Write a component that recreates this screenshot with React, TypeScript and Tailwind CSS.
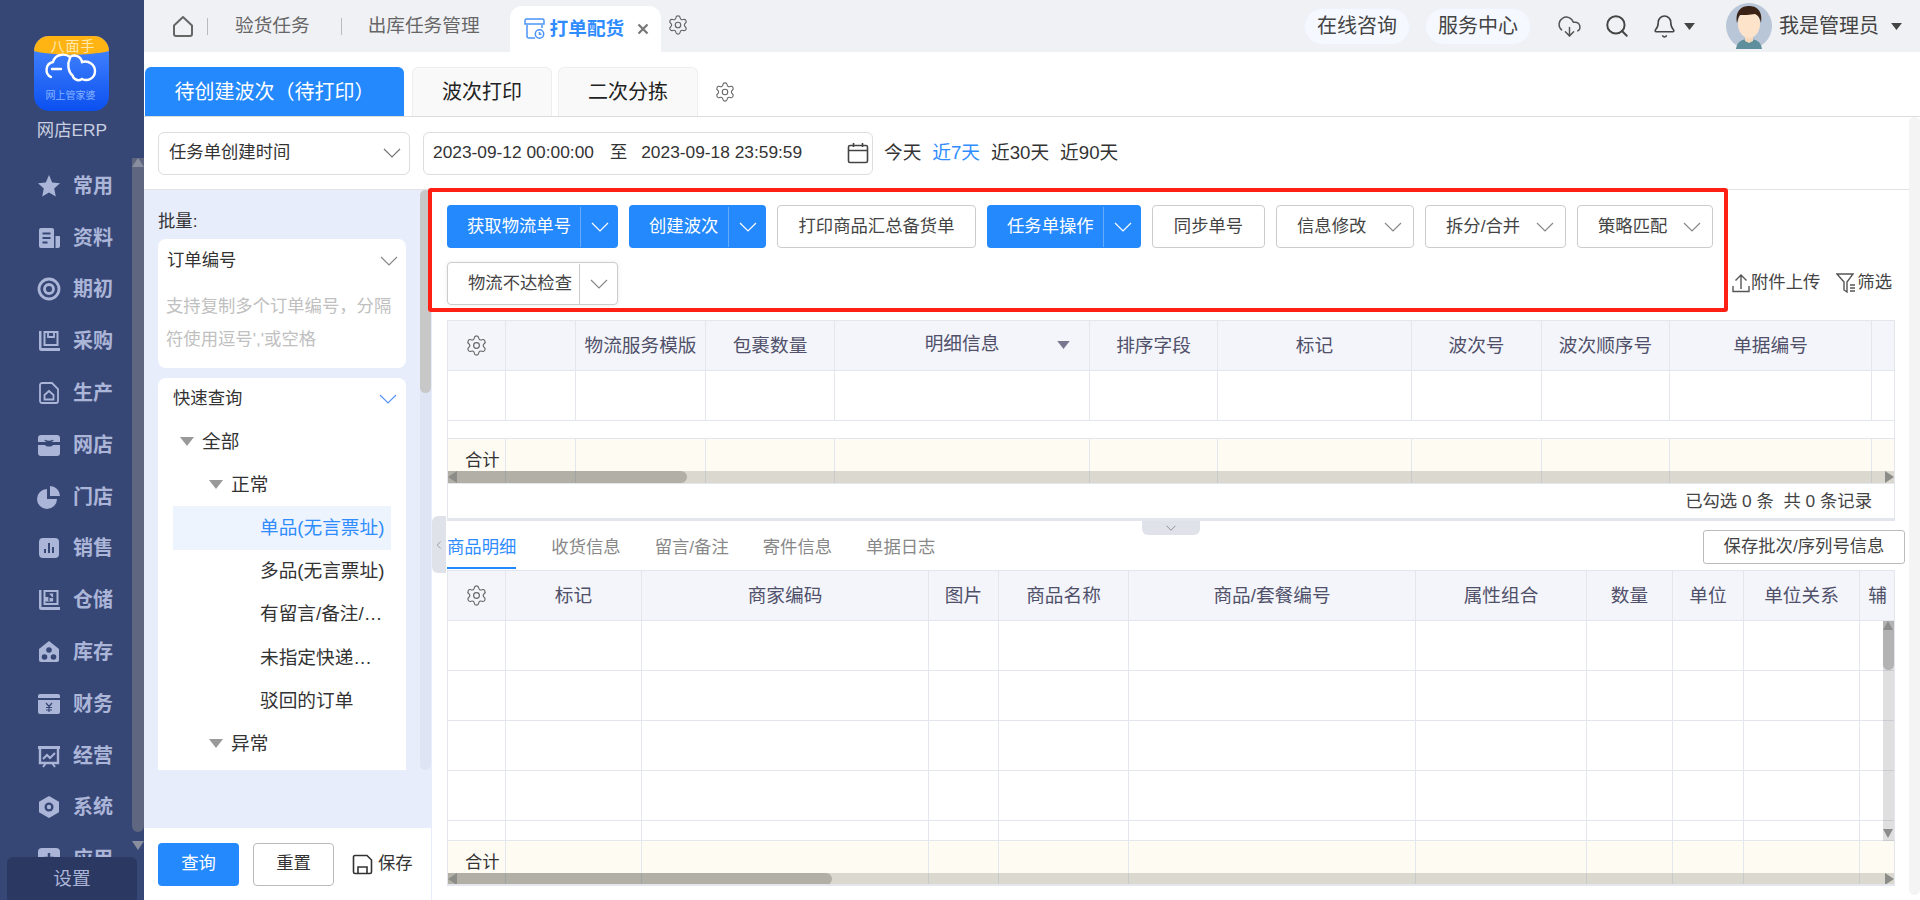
import { CloudDownload, Search, Bell, Settings } from 'lucide-react'
import type { ReactNode } from 'react'

const GRID_TOP = 'grid grid-cols-[58px_70px_130px_129px_255px_128px_194px_130px_128px_202px_24px]'
const GRID_BOTTOM = 'grid grid-cols-[58px_136px_287px_70px_130px_287px_171px_86px_71px_116px_36px]'

const TOP_HEADERS = ['', '', '物流服务模版', '包裹数量', '明细信息', '排序字段', '标记', '波次号', '波次顺序号', '单据编号', '']
const BOTTOM_HEADERS = ['', '标记', '商家编码', '图片', '商品名称', '商品/套餐编号', '属性组合', '数量', '单位', '单位关系', '辅']

function Chevron({ className }: { className?: string }) {
  return (
    <svg width="18" height="10" viewBox="0 0 18 10" fill="none" stroke="currentColor" strokeWidth="1.2" className={className}>
      <polyline points="1,1 9,9 17,1" />
    </svg>
  )
}

function Caret({ className }: { className: string }) {
  return (
    <svg width="14" height="9" viewBox="0 0 14 9" className={className}>
      <polygon points="0,0 14,0 7,9" fill="currentColor" />
    </svg>
  )
}

const MENU: { label: string; icon: ReactNode }[] = [
  { label: '常用', icon: <polygon points="12,1 15.2,8.4 23,9.2 17.2,14.6 18.8,22.6 12,18.4 5.2,22.6 6.8,14.6 1,9.2 8.8,8.4" fill="currentColor" /> },
  {
    label: '资料',
    icon: (
      <>
        <path d="M2 4a2 2 0 0 1 2-2h11a2 2 0 0 1 2 2v18H4a2 2 0 0 1-2-2z" fill="currentColor" />
        <path d="M18.5 10H22a1 1 0 0 1 1 1v9a2 2 0 0 1-2 2h-2.500z" fill="currentColor" />
        <path d="M5.500 7.500h8M5.500 12h8M5.500 16.500h5" stroke="#374775" strokeWidth="2" />
      </>
    ),
  },
  {
    label: '期初',
    icon: (
      <>
        <circle cx="12" cy="12" r="10" fill="none" stroke="currentColor" strokeWidth="2.800" />
        <circle cx="12" cy="12" r="4.500" fill="none" stroke="currentColor" strokeWidth="2.800" />
      </>
    ),
  },
  {
    label: '采购',
    icon: (
      <>
        <path d="M2 2h2.500v17H23v3H4.500A2.500 2.500 0 0 1 2 19.500z" fill="currentColor" />
        <path d="M7.500 3h13v13h-13z" fill="none" stroke="currentColor" strokeWidth="2" />
        <path d="M11 3v5h6V3" fill="none" stroke="currentColor" strokeWidth="1.800" />
      </>
    ),
  },
  {
    label: '生产',
    icon: (
      <>
        <path d="M5 2h10l6 6v12a2 2 0 0 1-2 2H5a2 2 0 0 1-2-2V4a2 2 0 0 1 2-2z" fill="none" stroke="currentColor" strokeWidth="1.800" />
        <path d="M7.500 14l4.500-4 4.500 4v4.500h-9z" fill="none" stroke="currentColor" strokeWidth="1.800" />
      </>
    ),
  },
  {
    label: '网店',
    icon: (
      <>
        <path d="M4 2h16a3 3 0 0 1 3 3v4H1V5a3 3 0 0 1 3-3z" fill="currentColor" />
        <path d="M1 12h7c1 2 7 2 8 0h7v8a3 3 0 0 1-3 3H4a3 3 0 0 1-3-3z" fill="currentColor" />
        <path d="M8 7c1 2 7 2 8 0" stroke="#374775" strokeWidth="1.600" fill="none" />
      </>
    ),
  },
  {
    label: '门店',
    icon: (
      <>
        <path d="M10 4a10 10 0 1 0 10 10H10z" fill="currentColor" />
        <path d="M13 1a10 10 0 0 1 10 10H13z" fill="currentColor" />
      </>
    ),
  },
  {
    label: '销售',
    icon: (
      <>
        <rect x="2" y="2" width="20" height="20" rx="4" fill="currentColor" />
        <path d="M8 17v-4M12 17V7M16 17v-6" stroke="#374775" strokeWidth="2" />
      </>
    ),
  },
  {
    label: '仓储',
    icon: (
      <>
        <path d="M2 2h2.500v17H23v3H4.500A2.500 2.500 0 0 1 2 19.500z" fill="currentColor" />
        <path d="M7.500 3h13v13h-13z" fill="none" stroke="currentColor" strokeWidth="2" />
        <path d="M12.500 6h3v7h-7v-3.500h7" fill="currentColor" stroke="currentColor" strokeWidth="1.200" />
        <path d="M12 9.500h4M12 6v7" stroke="#374775" strokeWidth="1.200" />
      </>
    ),
  },
  {
    label: '库存',
    icon: (
      <>
        <path d="M12 1l10 8v11a2 2 0 0 1-2 2H4a2 2 0 0 1-2-2V9z" fill="currentColor" />
        <circle cx="12" cy="10" r="2.800" fill="#374775" />
        <circle cx="7.500" cy="17" r="2.800" fill="#374775" />
        <circle cx="16.500" cy="17" r="2.800" fill="#374775" />
      </>
    ),
  },
  {
    label: '财务',
    icon: (
      <>
        <path d="M3 2h18a2 2 0 0 1 2 2v2H1V4a2 2 0 0 1 2-2z" fill="currentColor" />
        <path d="M1 8h22v12a2 2 0 0 1-2 2H3a2 2 0 0 1-2-2z" fill="currentColor" />
        <path d="M9 11l3 3.500 3-3.500M12 14.500V20M9 15.500h6M9 18h6" stroke="#374775" strokeWidth="1.200" fill="none" />
      </>
    ),
  },
  {
    label: '经营',
    icon: (
      <>
        <path d="M1 2h22v3H1z" fill="currentColor" />
        <path d="M3 5v14h18V5" fill="none" stroke="currentColor" strokeWidth="2.400" />
        <path d="M6 15l4-4 3 3 5-5" fill="none" stroke="currentColor" strokeWidth="2" />
        <path d="M6 23l3-4M18 23l-3-4" stroke="currentColor" strokeWidth="2" />
      </>
    ),
  },
  {
    label: '系统',
    icon: (
      <>
        <path d="M12 1l10 5.700v10.600L12 23 2 17.300V6.700z" fill="currentColor" />
        <circle cx="12" cy="12" r="4.500" fill="#374775" />
        <circle cx="12" cy="12" r="2.200" fill="currentColor" />
      </>
    ),
  },
  {
    label: '应用',
    icon: (
      <>
        <rect x="1" y="1" width="22" height="22" rx="4" fill="currentColor" />
        <path d="M12 6v10M7 11h10" stroke="#374775" strokeWidth="2.500" />
      </>
    ),
  },
]

const TREE = [
  { label: '全部', pad: 'pl-[7px]', arrow: true },
  { label: '正常', pad: 'pl-[36px]', arrow: true },
  { label: '单品(无言票址)', pad: 'pl-[87px]', active: true },
  { label: '多品(无言票址)', pad: 'pl-[87px]' },
  { label: '有留言/备注/…', pad: 'pl-[87px]' },
  { label: '未指定快递…', pad: 'pl-[87px]' },
  { label: '驳回的订单', pad: 'pl-[87px]' },
  { label: '异常', pad: 'pl-[36px]', arrow: true },
]

function Logo() {
  return (
    <svg width="75" height="75" viewBox="0 0 75 75" className="mx-[34px] block">
      <defs>
        <linearGradient id="logoBlue" x1="0" y1="0" x2="0" y2="1">
          <stop offset="0" stopColor="#4b8bff" />
          <stop offset="1" stopColor="#0b50f0" />
        </linearGradient>
        <clipPath id="logoClip">
          <rect width="75" height="75" rx="15" />
        </clipPath>
      </defs>
      <g clipPath="url(#logoClip)">
        <rect width="75" height="75" fill="url(#logoBlue)" />
        <path d="M0 0h75v15C55 20 20 20 0 15z" fill="#ffb414" />
        <text x="39" y="15" textAnchor="middle" fontSize="14" letterSpacing="1" fill="#ffe9b0">八面手</text>
        <path d="M17 41a8 8 0 0 1 2-15c2-8 12-9 17-5 4-3 11-1 12 5 7-2 13 3 13 9 0 7-7 11-13 8-3 2-6 2-9-2M18 33h9M36 22c-3 6-2 14 3 18" fill="none" stroke="#fff" strokeWidth="2.400" strokeLinecap="round" />
        <text x="36.500" y="63" textAnchor="middle" fontSize="10" fill="#86b2ff">网上管家婆</text>
      </g>
    </svg>
  )
}

function Sidebar() {
  return (
    <aside className="relative flex h-[900px] w-[144px] shrink-0 flex-col overflow-hidden bg-[#374775] pt-[36px]">
      <Logo />
      <div className="mt-[7px] h-[24px] text-center text-[17.33px] leading-[24px] text-[#c9cfe0]">网店ERP</div>
      <nav className="mt-[18px]">
        {MENU.map((item) => (
          <div key={item.label} className="flex h-[51.8px] items-center pl-[37px] text-[#abb5d8]">
            <svg width="24" height="24" viewBox="0 0 24 24" className="shrink-0">
              {item.icon}
            </svg>
            <span className="ml-[12px] text-[20px] font-bold">{item.label}</span>
          </div>
        ))}
      </nav>
      <div className="absolute right-0 top-[158px] h-[674px] w-[12px] rounded-b-md bg-[#5f667f]" />
      <div className="absolute right-0 top-[158px] h-0 w-0 border-x-[6px] border-b-[9px] border-x-transparent border-b-[#8a8f9f]" />
      <div className="absolute right-0 top-[841px] h-0 w-0 border-x-[6px] border-t-[9px] border-x-transparent border-t-[#8a8f9f]" />
      <div className="absolute bottom-0 left-[7px] flex h-[43px] w-[130px] items-center justify-center rounded-t-md bg-[#2b3862] text-[18.67px] text-[#abb5d8]">
        设置
      </div>
    </aside>
  )
}

function TopBar() {
  return (
    <header className="flex h-[52px] shrink-0 items-end bg-[#f0f1f5] text-[18.67px] text-[#666]">
      <div className="flex h-full items-center pl-[28px]">
        <svg width="22" height="22" viewBox="0 0 22 22" fill="none" stroke="#666" strokeWidth="2">
          <path d="M2 10.500L11 2l9 8.500V19a2 2 0 0 1-2 2H4a2 2 0 0 1-2-2z" strokeLinejoin="round" />
        </svg>
        <span className="ml-[13px] h-[17px] w-px bg-[#bbb]" />
        <span className="ml-[27px]">验货任务</span>
        <span className="ml-[31px] h-[17px] w-px bg-[#bbb]" />
        <span className="ml-[26px]">出库任务管理</span>
      </div>
      <div className="ml-[30px] flex h-[46px] w-[151px] items-center rounded-t-xl bg-white pl-[14px]">
        <svg width="21" height="22" viewBox="0 0 21 22" fill="none" stroke="#4a94f7" strokeWidth="1.500">
          <path d="M3 7v11a2 2 0 0 0 2 2h6M18 7v3M1 2.500A1.500 1.500 0 0 1 2.500 1h16A1.500 1.500 0 0 1 20 2.500V6H1z" />
          <circle cx="15.500" cy="16" r="4.200" />
          <path d="M15.500 14v2.200h2" />
        </svg>
        <span className="ml-[5px] font-bold text-[#2f8cff]">打单配货</span>
        <svg width="12" height="12" viewBox="0 0 12 12" stroke="#777" strokeWidth="2.200" className="ml-[13px]">
          <path d="M1.500 1.500l9 9M10.500 1.500l-9 9" />
        </svg>
      </div>
      <div className="flex h-full items-center">
        <Settings size={22} strokeWidth={1.3} className="ml-[6px] -mt-[3px] text-[#666]" />
      </div>
      <div className="ml-auto flex h-full items-center text-[20px] text-[#444]">
        <span className="flex h-[37px] w-[106px] items-center justify-center rounded-full border border-[#eef2fb] bg-[#f5f8ff]">在线咨询</span>
        <span className="ml-[15px] flex h-[37px] w-[106px] items-center justify-center rounded-full border border-[#eef2fb] bg-[#f5f8ff]">服务中心</span>
        <CloudDownload size={25} strokeWidth={1.4} className="ml-[26px] text-[#555]" />
        <Search size={26} strokeWidth={1.8} className="ml-[22px] text-[#444]" />
        <Bell size={25} strokeWidth={1.5} className="ml-[22px] text-[#444]" />
        <Caret className="ml-[7px] h-[7px] w-[11px] text-[#444]" />
        <svg width="46" height="46" viewBox="0 0 46 46" className="ml-[31px]">
          <circle cx="23" cy="23" r="23" fill="#b9c6d8" />
          <path d="M10 46c1-8 7-10 13-10s12 2 13 10z" fill="#5f8f9c" />
          <path d="M19 30h8v8l-4 2-4-2z" fill="#f6d9bd" />
          <ellipse cx="23" cy="21" rx="11" ry="14" fill="#fde3c9" />
          <path d="M11 20C9 7 16 3 23 3s14 4 12 17c-1-5-3-8-6-9-5 1-12 1-15 1-2 2-2 5-3 8z" fill="#3a2316" />
        </svg>
        <span className="ml-[7px]">我是管理员</span>
        <Caret className="ml-[12px] mr-[18px] h-[7px] w-[11px] text-[#444]" />
      </div>
    </header>
  )
}

function SubTabs() {
  return (
    <div className="flex h-[65px] shrink-0 items-end border-b border-[#ddd] pl-px text-[20px]">
      <div className="flex h-[49px] w-[259px] items-center justify-center rounded-t-md bg-[#2489fd] text-white">待创建波次（待打印）</div>
      <div className="ml-[8px] flex h-[49px] w-[140px] items-center justify-center rounded-t-md border border-b-0 border-[#eee] bg-[#f9f9f9] text-[#222]">波次打印</div>
      <div className="ml-[6px] flex h-[49px] w-[140px] items-center justify-center rounded-t-md border border-b-0 border-[#eee] bg-[#f9f9f9] text-[#222]">二次分拣</div>
      <div className="flex h-[49px] items-center">
        <Settings size={22} strokeWidth={1.2} className="ml-[16px] text-[#666]" />
      </div>
    </div>
  )
}

function FilterRow() {
  return (
    <div className="flex h-[73px] shrink-0 items-center border-b border-[#e2e2e2] pl-[14px] text-[#333]">
      <div className="flex h-[43px] w-[252px] items-center justify-between rounded-md border border-[#ddd] pl-[10px] pr-[8px] text-[17.33px]">
        任务单创建时间
        <Chevron className="text-[#777]" />
      </div>
      <div className="ml-[13px] flex h-[43px] w-[450px] items-center rounded-md border border-[#ddd] pl-[9px] text-[17.33px]">
        <span>2023-09-12 00:00:00</span>
        <span className="ml-[16px]">至</span>
        <span className="ml-[14px]">2023-09-18 23:59:59</span>
        <svg width="22" height="22" viewBox="0 0 22 22" fill="none" stroke="#444" strokeWidth="1.600" className="ml-[45px]">
          <rect x="1.500" y="3.500" width="19" height="17" rx="1.500" />
          <path d="M1.500 8.500h19M6.500 1v4M15.500 1v4" />
        </svg>
      </div>
      <div className="ml-[11px] flex gap-x-[11px] text-[18.67px]">
        <span>今天</span>
        <span className="text-[#2f8cff]">近7天</span>
        <span>近30天</span>
        <span>近90天</span>
      </div>
    </div>
  )
}

function SplitButton({ label, width, primary }: { label: string; width: string; primary?: boolean }) {
  return (
    <div
      className={`flex h-[43px] items-center rounded-[4px] pl-[20px] text-[17.33px] ${width} ${
        primary ? 'bg-[#2489fd] text-white' : 'border border-[#ccc] bg-white text-[#444] shadow-[0_0_4px_rgba(0,0,0,0.08)]'
      }`}
    >
      {label}
      <span className={`ml-auto flex h-[40px] w-[38px] items-center justify-center border-l ${primary ? 'border-white/30 text-white' : 'border-[#ccc] text-[#888]'}`}>
        <Chevron />
      </span>
    </div>
  )
}

function PlainButton({ label, width }: { label: string; width: string }) {
  return (
    <div className={`flex h-[43px] items-center justify-center rounded-[4px] border border-[#ccc] bg-white text-[17.33px] text-[#444] ${width}`}>
      {label}
    </div>
  )
}

function MenuButton({ label, width }: { label: string; width: string }) {
  return (
    <div className={`flex h-[43px] items-center rounded-[4px] border border-[#ccc] bg-white pl-[20px] pr-[11px] text-[17.33px] text-[#444] ${width}`}>
      {label}
      <Chevron className="ml-auto text-[#888]" />
    </div>
  )
}

function Toolbar() {
  return (
    <div className="flex h-[130px] shrink-0 pl-[15px] pt-[15px]">
      <div className="flex w-[1280px] flex-wrap content-start gap-x-[11px] gap-y-[14px]">
        <SplitButton label="获取物流单号" width="w-[171px]" primary />
        <SplitButton label="创建波次" width="w-[137px]" primary />
        <PlainButton label="打印商品汇总备货单" width="w-[199px]" />
        <SplitButton label="任务单操作" width="w-[154px]" primary />
        <PlainButton label="同步单号" width="w-[113px]" />
        <MenuButton label="信息修改" width="w-[138px]" />
        <MenuButton label="拆分/合并" width="w-[141px]" />
        <MenuButton label="策略匹配" width="w-[136px]" />
        <SplitButton label="物流不达检查" width="w-[171px]" />
      </div>
      <div className="ml-[5px] mt-[66px] flex h-[24px] items-center text-[17.33px] text-[#444]">
        <svg width="18" height="20" viewBox="0 0 18 20" fill="none" stroke="#555" strokeWidth="1.400">
          <path d="M9 16V2M3.500 7.500L9 2l5.500 5.500M1 13v5.500h16V13" />
        </svg>
        <span className="ml-[1px]">附件上传</span>
        <svg width="20" height="22" viewBox="0 0 20 22" fill="none" stroke="#555" strokeWidth="1.400" className="ml-[16px]">
          <path d="M1 2h16l-6 8v10l-3-2v-8zM14 13h5M14 16h5M14 19h5" />
        </svg>
        <span className="ml-[1px]">筛选</span>
      </div>
    </div>
  )
}

function HeaderCell({ label, index, sortable }: { label: string; index: number; sortable?: boolean }) {
  return (
    <div className="relative flex h-[50px] items-center justify-center border-r border-b border-[#e4e6ee] bg-[#f3f5fa] text-[18.67px] text-[#50506a]">
      {index === 0 && <Settings size={23} strokeWidth={1.2} className="text-[#666]" />}
      <span className={label === '明细信息' ? '-mt-[3px]' : ''}>{label}</span>
      {sortable && label === '明细信息' && <Caret className="absolute right-[19px] top-[20px] h-[8px] w-[13px] text-[#777790]" />}
    </div>
  )
}

function HorizontalScroll({ thumb }: { thumb: string }) {
  return (
    <div className="absolute inset-x-0 bottom-0 h-[12px] bg-[rgba(110,110,90,0.24)]">
      <div className={`h-full rounded-r-md bg-[rgba(70,70,60,0.28)] ${thumb}`} />
      <div className="absolute left-0 top-0 h-0 w-0 border-y-[6px] border-r-[9px] border-y-transparent border-r-[#8c8c88]" />
      <div className="absolute right-0 top-0 h-0 w-0 border-y-[6px] border-l-[9px] border-y-transparent border-l-[#8c8c88]" />
    </div>
  )
}

function EmptyRow({ grid, height }: { grid: string; height: string }) {
  return (
    <div className={grid}>
      {TOP_HEADERS.map((_, i) => (
        <div key={i} className={`border-r border-b border-[#e4e6ee] ${height}`} />
      ))}
    </div>
  )
}

function FooterRow({ grid, thumb }: { grid: string; thumb: string }) {
  return (
    <div className={`relative ${grid}`}>
      {TOP_HEADERS.map((_, i) => (
        <div key={i} className="flex h-[44px] items-center border-r border-[#e4e6ee] bg-[#fefbf3] pl-[17px] text-[17.33px] text-[#333]">
          {i === 0 && '合计'}
        </div>
      ))}
      <HorizontalScroll thumb={thumb} />
    </div>
  )
}

function TopTable() {
  return (
    <div className="ml-[15px] h-[201px] w-[1448px] shrink-0 overflow-hidden border border-b-[3px] border-[#e4e6ee]">
      <div className={GRID_TOP}>
        {TOP_HEADERS.map((label, i) => (
          <HeaderCell key={i} label={label} index={i} sortable />
        ))}
      </div>
      <EmptyRow grid={GRID_TOP} height="h-[50px]" />
      <div className="h-[18px] border-b border-[#e4e6ee]" />
      <FooterRow grid={GRID_TOP} thumb="w-[239px]" />
      <div className="flex h-[37px] items-center justify-end border-t border-[#e4e6ee] pr-[22px] text-[17.33px] text-[#444]">
        已勾选 0 条&nbsp; 共 0 条记录
      </div>
    </div>
  )
}

function BottomTabs() {
  return (
    <div className="flex h-[49px] shrink-0 items-start pl-[15px] pr-[15px] text-[17.33px] text-[#888]">
      <div className="h-[48px] border-b-[2px] border-[#2489fd] pt-[14px] text-[#2f8cff]">商品明细</div>
      <div className="ml-[35px] pt-[14px]">收货信息</div>
      <div className="ml-[34px] pt-[14px]">留言/备注</div>
      <div className="ml-[34px] pt-[14px]">寄件信息</div>
      <div className="ml-[34px] pt-[14px]">单据日志</div>
      <div className="ml-auto mt-[9px] flex h-[34px] w-[202px] items-center justify-center rounded-[3px] border border-[#bbb] text-[#444]">
        保存批次/序列号信息
      </div>
    </div>
  )
}

function BottomTable() {
  return (
    <div className="relative ml-[15px] h-[316px] w-[1448px] shrink-0 overflow-hidden border border-b-2 border-[#e4e6ee]">
      <div className={GRID_BOTTOM}>
        {BOTTOM_HEADERS.map((label, i) => (
          <HeaderCell key={i} label={label} index={i} />
        ))}
      </div>
      <EmptyRow grid={GRID_BOTTOM} height="h-[50px]" />
      <EmptyRow grid={GRID_BOTTOM} height="h-[50px]" />
      <EmptyRow grid={GRID_BOTTOM} height="h-[50px]" />
      <EmptyRow grid={GRID_BOTTOM} height="h-[50px]" />
      <EmptyRow grid={GRID_BOTTOM} height="h-[20px]" />
      <FooterRow grid={GRID_BOTTOM} thumb="w-[384px]" />
      <div className="absolute right-0 top-[50px] h-[220px] w-[11px] bg-[rgba(130,130,130,0.26)]">
        <div className="h-[49px] rounded-b-md bg-[rgba(80,80,80,0.3)]" />
        <div className="absolute left-0 top-0 h-0 w-0 border-x-[5.5px] border-b-[9px] border-x-transparent border-b-[#8c8c8c]" />
        <div className="absolute bottom-[3px] left-0 h-0 w-0 border-x-[5.5px] border-t-[9px] border-x-transparent border-t-[#8c8c8c]" />
      </div>
    </div>
  )
}

function QueryPanel() {
  return (
    <div className="flex w-[287px] shrink-0 flex-col">
      <div className="relative h-[638px] bg-[#e8edfc] px-[14px] pt-[20px]">
        <div className="text-[17.33px] leading-[22px] text-[#333]">批量:</div>
        <div className="mt-[7px] h-[129px] w-[248px] rounded-lg bg-white">
          <div className="flex h-[44px] items-center justify-between pl-[9px] pr-[8px] text-[17.33px] text-[#333]">
            订单编号
            <Chevron className="text-[#888]" />
          </div>
          <div className="whitespace-nowrap pl-[8px] pt-[7px] text-[17.33px] leading-[33px] text-[#c0c0c0]">
            支持复制多个订单编号，分隔
            <br />
            符使用逗号','或空格
          </div>
        </div>
        <div className="mt-[10px] h-[392px] w-[248px] overflow-hidden rounded-t-lg bg-white">
          <div className="flex h-[42px] items-center justify-between pl-[15px] pr-[9px] text-[17.33px] text-[#333]">
            快速查询
            <Chevron className="text-[#5b93f5]" />
          </div>
          <div className="mx-[15px]">
            {TREE.map((node) => (
              <div
                key={node.label}
                className={`flex h-[43.2px] items-center whitespace-nowrap text-[18.67px] ${node.pad} ${
                  node.active ? 'bg-[#edf4fd] text-[#2f8cff]' : 'text-[#333]'
                }`}
              >
                {node.arrow && <Caret className="mr-[8px] text-[#999]" />}
                {node.label}
              </div>
            ))}
          </div>
        </div>
        <div className="absolute right-0 top-0 h-[580px] w-[11px] rounded-md bg-[#dfe4f4]">
          <div className="h-[203px] rounded-md bg-[#c8c8c8]" />
        </div>
      </div>
      <div className="flex flex-1 items-center pl-[14px] text-[17.33px] text-[#333]">
        <div className="flex h-[43px] w-[81px] items-center justify-center rounded-[4px] bg-[#2489fd] text-white">查询</div>
        <div className="ml-[14px] flex h-[43px] w-[81px] items-center justify-center rounded-[4px] border border-[#bbb]">重置</div>
        <svg width="21" height="21" viewBox="0 0 21 21" fill="none" stroke="#333" strokeWidth="1.600" className="ml-[18px]">
          <path d="M3 1.500h12l4.500 4.500v12a1.500 1.500 0 0 1-1.500 1.500H3A1.500 1.500 0 0 1 1.500 18V3A1.500 1.500 0 0 1 3 1.500z" />
          <path d="M6 19.500V13h9v6.500" />
        </svg>
        <span className="ml-[5px]">保存</span>
      </div>
    </div>
  )
}

export default function App() {
  return (
    <div className="flex h-[900px] w-[1920px] overflow-hidden bg-white [font-family:'Liberation_Sans','Noto_Sans_CJK_SC',sans-serif]">
      <Sidebar />
      <main className="relative flex min-w-0 flex-1 flex-col">
        <TopBar />
        <SubTabs />
        <FilterRow />
        <div className="flex min-h-0 flex-1">
          <QueryPanel />
          <section className="relative flex min-w-0 flex-1 flex-col border-l border-[#e8edfc]">
            <Toolbar />
            <TopTable />
            <BottomTabs />
            <BottomTable />
            <div className="absolute left-0 top-[326px] flex h-[57px] w-[14px] items-center justify-center rounded-l-md bg-[#dfe2e9]">
              <Chevron className="h-[12px] w-[8px] rotate-90 text-[#666]" />
            </div>
            <div className="absolute left-[710px] top-[331px] flex h-[14px] w-[58px] items-center justify-center rounded-b-md bg-[#dfe2e9]">
              <Chevron className="h-[6px] w-[10px] text-[#666]" />
            </div>
            {/* red highlight drawn over the toolbar */}
            <div className="pointer-events-none absolute left-[-4px] top-[-2px] h-[124px] w-[1300px] rounded-[3px] border-4 border-[#ff2015]" />
          </section>
        </div>
        <div className="absolute bottom-[5px] right-0 top-[117px] w-[11px] rounded-md bg-[#f4f4f4]" />
      </main>
    </div>
  )
}
